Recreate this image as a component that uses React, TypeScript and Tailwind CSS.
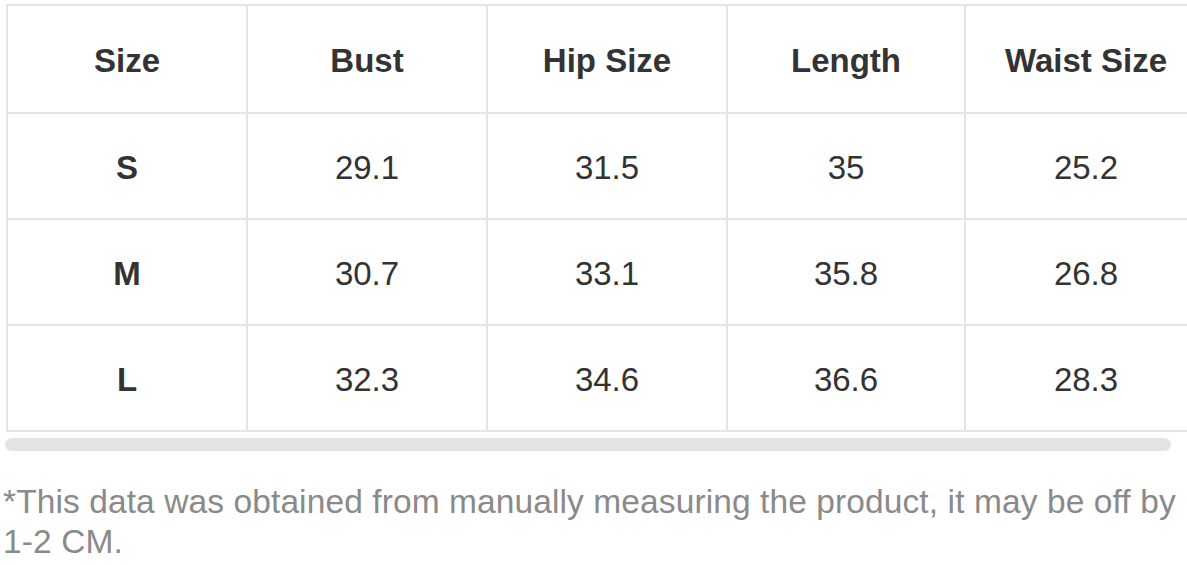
const headers = ["Size", "Bust", "Hip Size", "Length", "Waist Size"];

const rows = [
  ["S", "29.1", "31.5", "35", "25.2"],
  ["M", "30.7", "33.1", "35.8", "26.8"],
  ["L", "32.3", "34.6", "36.6", "28.3"],
];

export default function App() {
  return (
    <div className="w-[1187px] h-[565px] overflow-hidden bg-white font-['Liberation_Sans',Arial,sans-serif]">
      <div className="pt-[4px] pl-[6px] overflow-hidden">
        <table className="border-collapse w-[1200px] table-fixed">
          <colgroup>
            <col className="w-[240px]" />
            <col className="w-[240px]" />
            <col className="w-[240px]" />
            <col className="w-[238px]" />
            <col className="w-[242px]" />
          </colgroup>
          <thead>
            <tr className="h-[108px]">
              {headers.map((h) => (
                <th
                  key={h}
                  className="border-2 border-[#e4e4e4] pt-[4px] text-center text-[33px] font-bold text-[#333333]"
                >
                  {h}
                </th>
              ))}
            </tr>
          </thead>
          <tbody>
            {rows.map((r, i) => (
              <tr key={i} className="h-[106px]">
                {r.map((c, j) => (
                  <td
                    key={j}
                    className={
                      j === 0
                        ? "border-2 border-[#e4e4e4] pt-[4px] text-center text-[33px] font-bold text-[#333333]"
                        : "border-2 border-[#e4e4e4] pt-[4px] text-center text-[33px] text-[#333333]"
                    }
                  >
                    {c}
                  </td>
                ))}
              </tr>
            ))}
          </tbody>
        </table>
      </div>
      <div className="ml-[5px] mt-[6px] w-[1166px] h-[13px] rounded-full bg-[#e3e3e3]" />
      <p className="mt-[31px] pl-[3px] pr-[6px] text-[33.5px] leading-[40px] text-[#8a8a8a] tracking-[0.1px]">
        *This data was obtained from manually measuring the product, it may be off by 1-2 CM.
      </p>
    </div>
  );
}
